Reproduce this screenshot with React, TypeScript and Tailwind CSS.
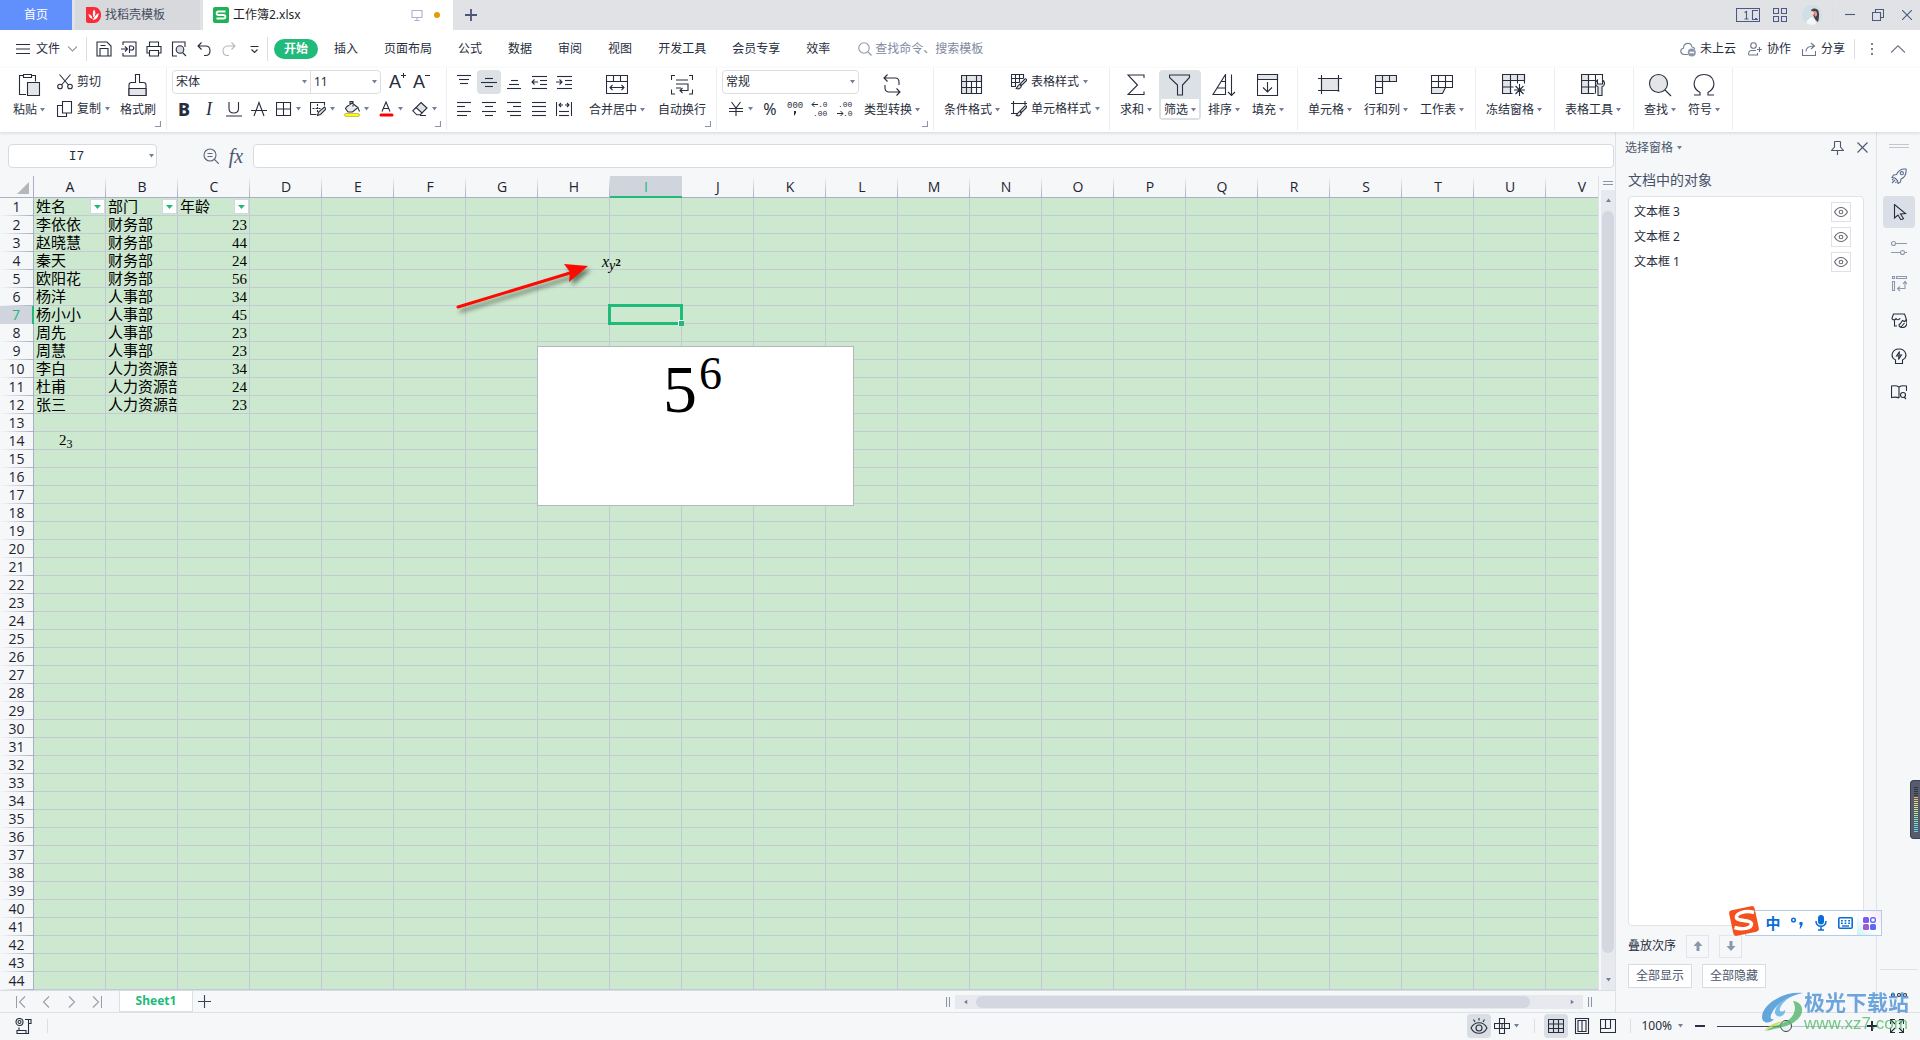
import type { ReactNode } from "react";
import clsx from "clsx";

const COLUMNS = "ABCDEFGHIJKLMNOPQRSTUV".split("");
const ROW_COUNT = 44;
const ACTIVE = { column: "I", row: 7 };

const SHEET: string[][] = [
  ["姓名", "部门", "年龄"],
  ["李依依", "财务部", "23"],
  ["赵晓慧", "财务部", "44"],
  ["秦天", "财务部", "24"],
  ["欧阳花", "财务部", "56"],
  ["杨洋", "人事部", "34"],
  ["杨小小", "人事部", "45"],
  ["周先", "人事部", "23"],
  ["周慧", "人事部", "23"],
  ["李白", "人力资源部", "34"],
  ["杜甫", "人力资源部", "24"],
  ["张三", "人力资源部", "23"],
];

const MENUS = ["插入", "页面布局", "公式", "数据", "审阅", "视图", "开发工具", "会员专享", "效率"];
const OBJECTS = ["文本框 3", "文本框 2", "文本框 1"];

interface IconProps {
  w?: number;
  h?: number;
  className?: string;
  children: ReactNode;
}

function Icon({ w = 16, h = 16, className, children }: IconProps) {
  return (
    <svg
      width={w}
      height={h}
      viewBox={`0 0 ${w} ${h}`}
      fill="none"
      stroke="currentColor"
      strokeWidth="1.1"
      className={clsx("shrink-0", className)}
      aria-hidden="true"
    >
      {children}
    </svg>
  );
}

function Caret({ className }: { className?: string }) {
  return (
    <svg width="5" height="4" viewBox="0 0 5 4" className={clsx("shrink-0 fill-[#73809b]", className)} aria-hidden="true">
      <path d="M0 0h5L2.5 3.5z" />
    </svg>
  );
}

function Divider({ className }: { className?: string }) {
  return <span className={clsx("w-px shrink-0 bg-[#dcdee3]", className)} />;
}

/* ---------- ribbon building blocks ---------- */

function Group({ className, corner, children }: { className: string; corner?: boolean; children: ReactNode }) {
  return (
    <div className={clsx("flex h-[62px] shrink-0 flex-col border-r border-[#eceef0]", className)}>
      <div className="flex h-[53px] pt-[2px] pl-[5px]">{children}</div>
      {corner && (
        <div className="flex justify-end pr-[5px]">
          <Icon w={6} h={6} className="text-[#8a93a8]">
            <path d="M5.5 0v5.5H0" />
          </Icon>
        </div>
      )}
    </div>
  );
}

interface BigButtonProps {
  label: string;
  icon: ReactNode;
  caret?: boolean;
  active?: boolean;
  className?: string;
}

function BigButton({ label, icon, caret = true, active, className }: BigButtonProps) {
  return (
    <button
      type="button"
      className={clsx("flex h-[50px] shrink-0 flex-col rounded-sm px-[2px]", active && "bg-[#dce1e6]", className)}
    >
      <span className="flex h-[29px] w-full items-center justify-center">{icon}</span>
      <span className={clsx("flex h-[19px] w-full items-center gap-[3px] px-[3px] pt-[2px]", active && "bg-white")}>
        {label}
        {caret && <Caret />}
      </span>
    </button>
  );
}

function SmallButton({ label, icon, caret }: { label: string; icon: ReactNode; caret?: boolean }) {
  return (
    <button type="button" className="flex h-6 items-center gap-1">
      {icon}
      {label}
      {caret && <Caret />}
    </button>
  );
}

function Tool({ name, active, children }: { name: string; active?: boolean; children: ReactNode }) {
  return (
    <button type="button" aria-label={name} className="flex h-6 w-[25px] items-center">
      <span className={clsx("flex h-6 w-6 items-center justify-center rounded-sm", active && "bg-[#dce1e6]")}>
        {children}
      </span>
    </button>
  );
}

function CaretTool({ name, children }: { name: string; children: ReactNode }) {
  return (
    <button type="button" aria-label={name} className="flex h-6 w-[34px] items-center gap-1 pl-1">
      {children}
      <Caret />
    </button>
  );
}

function Dropdown({ name, value, className }: { name: string; value: string; className: string }) {
  return (
    <span className={clsx("relative flex h-6 items-center", className)}>
      <select aria-label={name} className="h-full w-full appearance-none bg-transparent pl-[3px] text-xs outline-none">
        <option>{value}</option>
      </select>
      <Caret className="pointer-events-none absolute right-[3px]" />
    </span>
  );
}

/* Horizontal strokes of the alignment icons: [x, y, width] */
function Lines({ rows, children }: { rows: number[][]; children?: ReactNode }) {
  return (
    <Icon>
      {rows.map(([x, y, w]) => (
        <path key={`${x}-${y}`} d={`M${x} ${y}.5h${w}`} />
      ))}
      {children}
    </Icon>
  );
}

const Brush = () => (
  <>
    <path fill="#fff" d="M15.5 6.5l-5 5-1.5-1.5 5-5c1-.7 2 .5 1.5 1.5z" />
    <path fill="#dfe1e4" d="M8.800 10.500c-2 .3-2 2.500-3.500 4 2.200.8 4.700.2 5-2.500z" />
  </>
);

/* ---------- top bars ---------- */

function TitleBar() {
  return (
    <header className="flex h-[30px] shrink-0 items-stretch bg-[#e1e2e6]">
      <button type="button" className="w-[72px] bg-[#618ffc] text-white">
        首页
      </button>
      <button type="button" className="ml-[3px] flex w-[125px] items-center gap-1 bg-[#d8d9dc] pl-[11px] text-[#454c5f]">
        <svg width="15" height="16" viewBox="0 0 15 16" aria-hidden="true">
          <path fill="#fa2c37" d="M0 0h8c4 0 7 3.500 7 8s-3 8-7 8H2c-1 0-2-1-2-2z" />
          <path fill="#fff" d="M8 2.500c2.200 2.500 1.500 6-.5 8-1-3-1-5.500.5-8zM2.500 7c2.500.5 4 2.500 4 4.800C4 11.500 2.700 9.500 2.500 7zM12.500 6c.5 3-1.500 6.500-5.800 7.200C8 10.200 9.500 8 12.500 6z" />
        </svg>
        找稻壳模板
      </button>
      <div className="ml-[3px] flex w-[250px] items-center bg-white pl-[10px] text-[#1c1f2a]">
        <svg width="16" height="16" viewBox="0 0 16 16" className="mr-1" aria-hidden="true">
          <rect width="16" height="16" rx="2" fill="#1eb257" />
          <path d="M12.500 4.500h-7c-2.500 0-2.500 3.500 0 3.500h5c2.500 0 2.500 3.500 0 3.500h-7" fill="none" stroke="#fff" strokeWidth="1.800" />
        </svg>
        工作簿2.xlsx
        <Icon w={12} h={12} className="ml-auto text-[#a9b4cc]">
          <path d="M1 1.500h10v7H1zM6 8.500v2.500M3.500 11.500h5" />
        </Icon>
        <span className="mr-[13px] ml-[11px] size-[6px] rounded-full bg-[#e59a0a]" />
      </div>
      <button type="button" aria-label="新建" className="ml-3 text-[#4b5676]">
        <Icon w={12} h={12}>
          <path d="M6 0v12M0 6h12" strokeWidth="1.800" />
        </Icon>
      </button>
      <div className="ml-auto flex items-center pr-2 text-[#4a5a80]">
        <Icon w={24} h={14}>
          <path d="M.5.5h23v13H.5zM22 2.500h-5.500v9H22M19 10.500h2" />
          <path d="M8.500 4.500l2-1v7.500M8.500 11h4" />
        </Icon>
        <Icon w={14} h={14} className="ml-[13px]">
          <path d="M.5.5h5v5h-5zM8.500.5h5v5h-5zM.5 8.500h5v5h-5zM8.500 8.500h5v5h-5z" />
        </Icon>
        <svg width="20" height="20" viewBox="0 0 20 20" className="ml-[15px] rounded-full" aria-hidden="true">
          <rect width="20" height="20" fill="#cfdfe6" />
          <path fill="#4a3c42" d="M9 5c2-2.500 6.500-2 7.500 1 1 3.500.5 8-.5 11-2-1-3-3-4-5z" />
          <path fill="#d99a92" d="M12 6c2-.5 3.500 1 3 4-.5 1.500-1.500 2-2.500 1z" />
          <path fill="#f3d5cb" d="M8 7c1-1.500 3-1.500 4 0 .5 2-.5 3.500-2 4C8.500 10.500 7.500 9 8 7z" />
          <path fill="#f4f7f8" d="M4 20c0-4 2.500-6.500 6-8 2 2 4 4 4.500 8z" />
        </svg>
        <Divider className="ml-[10px] h-5 bg-[#c5c8cf]" />
        <button type="button" aria-label="最小化" className="ml-3">
          <Icon w={10} h={12}>
            <path d="M0 5.500h10" />
          </Icon>
        </button>
        <button type="button" aria-label="还原" className="ml-[17px]">
          <Icon w={12} h={12}>
            <path d="M.5 3.500h8v8h-8zM3.500 3.500v-3h8v8h-3" />
          </Icon>
        </button>
        <button type="button" aria-label="关闭" className="ml-[18px]">
          <Icon w={10} h={10}>
            <path d="M0 0l10 10M10 0L0 10" />
          </Icon>
        </button>
      </div>
    </header>
  );
}

function QuickButton({ name, faded, children }: { name: string; faded?: boolean; children: ReactNode }) {
  return (
    <button type="button" aria-label={name} className={clsx("flex w-[25px] justify-center", faded && "text-[#b3b6be]")}>
      <Icon>{children}</Icon>
    </button>
  );
}

function MenuBar() {
  return (
    <nav className="flex h-[38px] shrink-0 items-center bg-white pr-[15px] pl-4">
      <button type="button" className="flex items-center">
        <Icon w={14} h={10} className="mr-[6px]">
          <path d="M0 .5h14M0 5h14M0 9.500h14" />
        </Icon>
        文件
        <Icon w={9} h={6} className="ml-2 text-[#9297a5]">
          <path d="M0 .5l4.500 4.500L9 .5" />
        </Icon>
      </button>
      <Divider className="mr-1 ml-[9px] h-6" />
      <QuickButton name="保存">
        <path d="M1 1h10l4 4v10H1zM4 15V7.500h8V15M4.500 4.500h5" />
      </QuickButton>
      <QuickButton name="输出为PDF">
        <path d="M2 4V1h13v14H2v-3M0 8h6M4 5.500L6.500 8 4 10.500M8.500 12V5h2c3 0 3 4 0 4h-2" />
      </QuickButton>
      <QuickButton name="打印">
        <path d="M3.500 5V1h9v4M3.500 12H1V5.500h14V12h-2.500M3.500 9.500h9V15h-9z" />
      </QuickButton>
      <QuickButton name="打印预览">
        <path d="M6 15H1.500V1h12.500v5M11.500 11.500L15 15" />
        <circle cx="9" cy="8.500" r="3.800" fill="#d9dce1" />
      </QuickButton>
      <QuickButton name="撤销">
        <path d="M5.500 1.500L2 5l3.500 3.500M2 5h7.500c6 0 6 9.500 0 9.500H8" />
      </QuickButton>
      <QuickButton name="恢复" faded>
        <path d="M10.500 1.500L14 5l-3.500 3.500M14 5H6.500c-6 0-6 9.500 0 9.500H8" />
      </QuickButton>
      <QuickButton name="自定义快速访问工具栏">
        <path d="M4.500 5.500h8M5.500 8.500l3 3 3-3" />
      </QuickButton>
      <Divider className="mr-[6px] ml-px h-6" />
      <button type="button" className="mr-4 h-5 rounded-full bg-[#20ba7b] px-[10px] font-bold text-white">
        开始
      </button>
      <div className="flex gap-[26px]">
        {MENUS.map((menu) => (
          <button type="button" key={menu}>
            {menu}
          </button>
        ))}
      </div>
      <label className="ml-7 flex items-center gap-[3px] text-[#8d99b0]">
        <Icon w={14} h={14}>
          <circle cx="6" cy="6" r="5.200" />
          <path d="M10 10l3.500 3.500" />
        </Icon>
        <input
          aria-label="查找命令"
          placeholder="查找命令、搜索模板"
          className="w-32 outline-none placeholder:text-[#8089a0]"
        />
      </label>
      <div className="ml-auto flex items-center">
        <button type="button" className="flex items-center gap-1">
          <Icon className="text-[#77819a]">
            <path d="M8 13.500H4.500c-4.500 0-5-5.500-1-6.200C3.500 1.500 11 .5 12 6c1.500.2 2.500 1 2.800 2" />
            <circle cx="11.800" cy="11.500" r="4" fill="#8d97ab" stroke="none" />
            <path d="M9.500 11.500h4.600" stroke="#fff" strokeWidth="1.500" />
          </Icon>
          未上云
        </button>
        <button type="button" className="ml-3 flex items-center gap-[5px]">
          <Icon w={14} h={14} className="text-[#6b7489]">
            <circle cx="5.500" cy="3.500" r="2.800" />
            <path d="M8 8.500H3c-3 0-2.500 4.500-2 4.500h8.500V11M9 7.500h5M11.500 5v5" />
          </Icon>
          协作
        </button>
        <button type="button" className="ml-[11px] flex items-center gap-[5px]">
          <Icon w={14} h={14} className="text-[#6b7489]">
            <path d="M.5 7v6.500h13V9M4 9.500C4 6 6.500 4 12 4M9 1l3.500 3L9 7" />
          </Icon>
          分享
        </button>
        <Divider className="ml-[9px] h-5" />
        <button type="button" aria-label="更多" className="ml-[15px] text-[#7c8190]">
          <svg width="4" height="14" viewBox="0 0 4 14" fill="currentColor" aria-hidden="true">
            <path d="M1 1h2v2H1zM1 6h2v2H1zM1 11h2v2H1z" />
          </svg>
        </button>
        <button type="button" aria-label="收起功能区" className="ml-[17px] text-[#6b7080]">
          <Icon w={14} h={8}>
            <path d="M0 7.500L7 .8l7 6.700" />
          </Icon>
        </button>
      </div>
    </nav>
  );
}

function Ribbon() {
  return (
    <div className="relative z-10 flex h-16 shrink-0 bg-white shadow-[0_1px_3px_rgba(60,70,90,0.18)]">
      <Group className="w-[167px]" corner>
        <BigButton
          className="ml-[3px]"
          label="粘贴"
          icon={
            <Icon w={24} h={24}>
              <path d="M9 21.500H2.500v-19H6M15 2.500h3.500v6M6.500 1.500h8v3h-8z" />
              <path d="M10.500 9.500h12v13h-12z" fill="#e3e5e9" />
            </Icon>
          }
        />
        <div className="ml-[7px] flex w-[58px] flex-col gap-[3px]">
          <SmallButton
            label="剪切"
            icon={
              <Icon>
                <path d="M2.500.5L11.500 11M13.500.5L4.500 11" />
                <circle cx="3" cy="12.500" r="2.300" />
                <circle cx="13" cy="12.500" r="2.300" />
              </Icon>
            }
          />
          <SmallButton
            label="复制"
            caret
            icon={
              <Icon>
                <path d="M5 4.500H.5v11h9V12M5.500.5h9V12h-9z" />
              </Icon>
            }
          />
        </div>
        <BigButton
          label="格式刷"
          caret={false}
          icon={
            <Icon w={20} h={24}>
              <path d="M7.500 9.500v-8h4v8h4c1.500 0 2.500 1 2.500 2.500v10.500H1V12c0-1.500 1-2.500 2.500-2.500z" />
              <path d="M1 15.500h17v7H1z" fill="#e3e5e9" />
            </Icon>
          }
        />
      </Group>

      <Group className="w-[280px]" corner>
        <div className="flex flex-col gap-[3px]">
          <div className="flex">
            <div className="flex h-6 rounded-sm border border-[#dcdee2]">
              <Dropdown name="字体" value="宋体" className="-my-px w-[138px] border-r border-[#dcdee2]" />
              <Dropdown name="字号" value="11" className="-my-px w-[69px]" />
            </div>
            <button type="button" aria-label="增大字号" className="ml-1 flex h-6 w-6 items-center justify-center">
              <svg width="18" height="22" fill="currentColor" aria-hidden="true">
                <text x="1" y="17" fontSize="18" className="font-['Liberation_Sans',sans-serif]">A</text>
                <path d="M13 4.500h5M15.500 2v5" stroke="currentColor" />
              </svg>
            </button>
            <button type="button" aria-label="减小字号" className="flex h-6 w-6 items-center justify-center">
              <svg width="18" height="22" fill="currentColor" aria-hidden="true">
                <text x="1" y="17" fontSize="18" className="font-['Liberation_Sans',sans-serif]">A</text>
                <path d="M13 4.500h5" stroke="currentColor" />
              </svg>
            </button>
          </div>
          <div className="flex">
            <Tool name="加粗">
              <span className="text-lg leading-5 font-extrabold">B</span>
            </Tool>
            <Tool name="倾斜">
              <span className="font-['Liberation_Serif',serif] text-lg leading-5 italic">I</span>
            </Tool>
            <Tool name="下划线">
              <Icon>
                <path d="M3 1v6.500c0 6 9.500 6 9.500 0V1M0 15h16" />
              </Icon>
            </Tool>
            <Tool name="删除线">
              <Icon>
                <path d="M3 15L8 1.500 13 15M0 9.500h16" />
              </Icon>
            </Tool>
            <CaretTool name="边框">
              <Icon>
                <path d="M.5 1.500h14v13H.5zM7.500 1.500v13M.5 8h14" />
              </Icon>
            </CaretTool>
            <CaretTool name="绘图边框">
              <Icon>
                <path d="M.5 13.500V1.500h14v3M.5 13.500h6" />
                <path d="M7.500 3v8M2.500 7.500h9" strokeDasharray="2 1" />
                <path d="M7.500 14.500l1-3.500 6-5 1.500 2-5.500 5.500z" fill="#dfe1e4" />
              </Icon>
            </CaretTool>
            <CaretTool name="填充颜色">
              <Icon>
                <path d="M3 5.500L8 2l6 4.500L8.500 11H4L1.500 7.500zM6 4V.5h3v5" fill="#e9eaee" />
                <path d="M14 7l1.500 3.500" />
                <rect x=".5" y="12.500" width="15" height="3" rx="1.500" fill="#ffff00" stroke="#9a9a4a" strokeWidth=".6" />
              </Icon>
            </CaretTool>
            <CaretTool name="字体颜色">
              <Icon>
                <path d="M4 10.500L8 1l4 9.500M5.500 7.500h5" />
                <rect x="1.500" y="12.500" width="14" height="3" rx="1.500" fill="#ff0000" stroke="none" />
              </Icon>
            </CaretTool>
            <CaretTool name="清除">
              <Icon>
                <path d="M9 1.500l6 5.500-5 5-6-5.500z" fill="#dfe1e4" />
                <path d="M4 6.500L.8 9.800l4 4h3.400L10 12M8 14.500h6" />
              </Icon>
            </CaretTool>
          </div>
        </div>
      </Group>

      <Group className="w-[270px]" corner>
        <div className="flex w-[125px] shrink-0 flex-col gap-[3px]">
          <div className="flex">
            <Tool name="顶端对齐">
              <Lines rows={[[1, 1, 14], [3, 5, 10], [4, 9, 8]]} />
            </Tool>
            <Tool name="垂直居中" active>
              <Lines rows={[[4, 4, 8], [0, 8, 16], [4, 12, 8]]} />
            </Tool>
            <Tool name="底端对齐">
              <Lines rows={[[5, 6, 7], [3, 10, 10], [1, 14, 14]]} />
            </Tool>
            <Tool name="减少缩进">
              <Lines rows={[[1, 2, 15], [9, 6, 7], [9, 10, 7], [1, 14, 15]]}>
                <path d="M7 8H1M3.500 5.500L1 8l2.500 2.500" />
              </Lines>
            </Tool>
            <Tool name="增加缩进">
              <Lines rows={[[1, 2, 15], [9, 6, 7], [9, 10, 7], [1, 14, 15]]}>
                <path d="M0 8h6M3.500 5.500L6 8l-2.500 2.500" />
              </Lines>
            </Tool>
          </div>
          <div className="flex">
            <Tool name="左对齐">
              <Lines rows={[[1, 1, 14], [1, 5, 8], [1, 10, 14], [1, 14, 10]]} />
            </Tool>
            <Tool name="水平居中">
              <Lines rows={[[1, 1, 14], [4, 5, 8], [1, 10, 14], [4, 14, 8]]} />
            </Tool>
            <Tool name="右对齐">
              <Lines rows={[[1, 1, 14], [7, 5, 8], [1, 10, 14], [4, 14, 11]]} />
            </Tool>
            <Tool name="两端对齐">
              <Lines rows={[[1, 1, 14], [1, 5, 14], [1, 10, 14], [1, 14, 14]]} />
            </Tool>
            <Tool name="分散对齐">
              <Lines rows={[[3, 10, 10], [3, 14, 10]]}>
                <path d="M.5 1v14M15.500 1v14M3 4h4M9 4h4M5 2L3 4l2 2M11 2l2 2-2 2" />
              </Lines>
            </Tool>
          </div>
        </div>
        <BigButton
          className="ml-[7px]"
          label="合并居中"
          icon={
            <Icon w={22} h={20}>
              <path d="M.5.5h21v18H.5zM.5 6.500h21M7.500.5v6M14.500.5v6M4 12.500h14M6.500 10L4 12.500 6.500 15M15.500 10l2.500 2.500-2.500 2.500" />
            </Icon>
          }
        />
        <BigButton
          className="ml-[3px]"
          label="自动换行"
          caret={false}
          icon={
            <Icon w={22} h={20}>
              <path d="M4 .5H.5V5M18 .5h3.500V5M4 19H.5v-4.500M18 19h3.500v-4.500M5 5h12M5 9h12v6.500H9M5 13h5M11.500 13L9 15.500l2.500 2.500" />
            </Icon>
          }
        />
      </Group>

      <Group className="w-[217px]" corner>
        <div className="flex w-[137px] shrink-0 flex-col gap-[3px]">
          <Dropdown name="数字格式" value="常规" className="rounded-sm border border-[#dcdee2]" />
          <div className="flex pl-[2px] font-['Liberation_Mono',monospace]">
            <CaretTool name="货币">
              <Icon>
                <path d="M3.500 1L8 7l4.500-6M1 7.500h14M1 10.500h14M8 7v8" />
              </Icon>
            </CaretTool>
            <Tool name="百分比">
              <span className="font-['Noto_Sans',sans-serif] text-base leading-5">%</span>
            </Tool>
            <Tool name="千位分隔">
              <svg width="18" height="20" fill="currentColor" aria-hidden="true">
                <text x="1" y="9" fontSize="9">000</text>
                <path d="M8 12h2v2l-1.500 2.500H8z" />
              </svg>
            </Tool>
            <Tool name="增加小数位">
              <svg width="18" height="20" fill="currentColor" aria-hidden="true">
                <text x="7" y="8" fontSize="8">.0</text>
                <text x="2" y="17" fontSize="8">.00</text>
                <path d="M7 5.500H1M3.500 3L1 5.500 3.500 8" stroke="currentColor" fill="none" />
              </svg>
            </Tool>
            <Tool name="减少小数位">
              <svg width="18" height="20" fill="currentColor" aria-hidden="true">
                <text x="2" y="8" fontSize="8">.00</text>
                <text x="7" y="17" fontSize="8">.0</text>
                <path d="M1 14.500h6M4.500 12L7 14.500 4.500 17" stroke="currentColor" fill="none" />
              </svg>
            </Tool>
          </div>
        </div>
        <BigButton
          label="类型转换"
          icon={
            <Icon w={20} h={22}>
              <path d="M5.500.5L2 4l3.500 3.500M2 4h11c2.500 0 4 1.500 4 4v3M14.500 21.500L18 18l-3.500-3.500M18 18H7c-2.500 0-4-1.500-4-4v-3" />
            </Icon>
          }
        />
      </Group>

      <Group className="w-[176px]">
        <BigButton
          label="条件格式"
          icon={
            <Icon w={22} h={20}>
              <path d="M.5.500h20v6H5.500v6h5v6H.5z" fill="#e3e5e9" />
              <path d="M.5.500h20v18H.5zM.5 6.500h20M.5 12.500h20M5.500.5v18M15.500.5v18M10.500 6.500v12" />
            </Icon>
          }
        />
        <div className="ml-[6px] flex flex-col gap-[3px]">
          <SmallButton
            label="表格样式"
            caret
            icon={
              <Icon>
                <path d="M5 12.500H.5V.5h12v4M.5 4.500h12M.5 8.500h8M4.500.5v12M8.500.5v8" />
                <Brush />
              </Icon>
            }
          />
          <SmallButton
            label="单元格样式"
            caret
            icon={
              <Icon>
                <path d="M0 2.500h16M2.500 0v13M14 0v4M0 12.500h6" />
                <Brush />
              </Icon>
            }
          />
        </div>
      </Group>

      <Group className="w-[188px]">
        <div className="flex gap-[2px]">
          <BigButton
            label="求和"
            icon={
              <Icon w={18} h={22}>
                <path d="M17 4V1H1l9.500 10L1 20.500h16v-3" />
              </Icon>
            }
          />
          <BigButton
            label="筛选"
            active
            icon={
              <Icon w={22} h={22}>
                <path d="M.5 1h20v2.500l-7 7.500v10h-5V11l-8-7.500z" />
              </Icon>
            }
          />
          <BigButton
            label="排序"
            icon={
              <Icon w={24} h={22}>
                <path d="M13.500.5v20H1zM9.500 7.500h4M5.500 14h8M19.500.5v21M16 18l3.500 3.500L23 18" />
              </Icon>
            }
          />
          <BigButton
            label="填充"
            icon={
              <Icon w={22} h={22}>
                <path d="M.5.500h20v5H.5z" fill="#e3e5e9" />
                <path d="M.5.500h20v21H.5zM10.500 8v10M6 13.500l4.500 4.500 4.500-4.500" />
              </Icon>
            }
          />
        </div>
      </Group>

      <Group className="w-[178px]">
        <div className="flex gap-[2px]">
          <BigButton
            label="单元格"
            icon={
              <Icon w={24} h={20}>
                <path d="M3.500 3.500h17v12h-17z" fill="#e3e5e9" />
                <path d="M0 3.500h24M0 15.500h17M3.500 0v19M20.500 0v12M19.500 16h2" />
              </Icon>
            }
          />
          <BigButton
            label="行和列"
            icon={
              <Icon w={22} h={20}>
                <path d="M.5.500h21v6h-14v12h-7z" fill="#e3e5e9" />
                <path d="M.5 6.500h7M7.500.5v6M14.500.5v6" />
                <path d="M.5 6.500h7v12h-7zM.5 12.500h7" fill="#fff" />
              </Icon>
            }
          />
          <BigButton
            label="工作表"
            icon={
              <Icon w={22} h={20}>
                <path d="M.5 12.500h14l-3 6H.5z" fill="#e3e5e9" />
                <path d="M.5.500h21v12H.5zM.5 6.500h21M7.500.5v12M14.500.5v12" />
              </Icon>
            }
          />
        </div>
      </Group>

      <Group className="w-[79px]">
        <BigButton
          label="冻结窗格"
          icon={
            <Icon w={24} h={22}>
              <path d="M.5.500h22v6h-14v13h-8z" fill="#e3e5e9" />
              <path d="M.5 19.500V.5h22v9M.5 19.500h10M.5 6.500h22M.5 13h11M8.500.5v19M15.500.5v9M17.500 10v12M12 16h11M13.500 12l8 8M21.500 12l-8 8" />
            </Icon>
          }
        />
      </Group>

      <Group className="w-[79px]">
        <BigButton
          label="表格工具"
          icon={
            <Icon w={24} h={22}>
              <path d="M.5.500h7v19h-7z" fill="#e3e5e9" />
              <path d="M.5 19.500V.5h21v5M.5 19.500h13M.5 6.500h14M.5 13h14M7.500.5v19M14.500.5v19" />
              <path d="M16.500 6c-3 2-2.500 5.500.5 7v8.500h4V13c3-1.500 3.500-5 .5-7v4h-5z" fill="#e3e5e9" />
            </Icon>
          }
        />
      </Group>

      <Group className="w-[99px]">
        <div className="flex gap-[2px]">
          <BigButton
            label="查找"
            icon={
              <Icon w={24} h={24}>
                <circle cx="10.500" cy="10.500" r="9" fill="#e3e5e9" />
                <path d="M17 17l6 6" />
              </Icon>
            }
          />
          <BigButton
            label="符号"
            icon={
              <Icon w={22} h={24}>
                <path d="M1 22h6v-2.500C-3 14 1 1.500 11 1.500S25 14 15 19.500V22h6" />
              </Icon>
            }
          />
        </div>
      </Group>
    </div>
  );
}

/* ---------- worksheet ---------- */

function FormulaBar() {
  return (
    <div className="flex h-11 shrink-0 items-start pt-3 pr-px pl-2">
      <div className="relative flex h-6 w-[149px] items-center">
        <input
          aria-label="名称框"
          defaultValue="I7"
          className="h-full w-full rounded-sm border border-[#d7dadf] bg-white pr-3 text-center font-['Liberation_Mono',monospace] text-[13px] outline-none"
        />
        <Caret className="absolute right-[3px]" />
      </div>
      <button type="button" aria-label="查找公式" className="mt-1 ml-[46px] text-[#5d667c]">
        <Icon w={16} h={16}>
          <circle cx="7" cy="7" r="6" />
          <path d="M11.500 11.500L16 16M4.500 5.500h5M4.500 8.500h5" />
        </Icon>
      </button>
      <button
        type="button"
        aria-label="插入函数"
        className="ml-[9px] w-4 font-['Liberation_Serif',serif] text-xl leading-6 text-[#4d566c] italic"
      >
        fx
      </button>
      <input
        aria-label="编辑栏"
        className="ml-[9px] h-6 min-w-0 flex-1 rounded-sm border border-[#d7dadf] bg-white px-2 outline-none"
      />
    </div>
  );
}

function FilterButton({ column }: { column: string }) {
  return (
    <button
      type="button"
      aria-label={`筛选${column}`}
      className="flex h-[15px] w-[15px] items-center justify-center border border-[#d3d7df] bg-white"
    >
      <svg width="7" height="4" viewBox="0 0 7 4" className="fill-[#20ba7b]" aria-hidden="true">
        <path d="M0 0h7L3.500 4z" />
      </svg>
    </button>
  );
}

function Grid() {
  return (
    <table className="w-[1618px] table-fixed border-separate border-spacing-0 font-['Open_Sans',sans-serif] text-sm leading-[14px]">
      <thead>
        <tr className="h-[22px]">
          <th className="w-[34px] border-r border-b border-[#a9afc5] p-0">
            <svg width="12" height="12" className="mt-[3px] mr-1 ml-auto block fill-[#b7b7b7]" aria-hidden="true">
              <path d="M12 0v12H0z" />
            </svg>
          </th>
          {COLUMNS.map((column) => (
            <th
              key={column}
              scope="col"
              className={clsx(
                "w-[72px] border-b p-0 font-normal",
                column === ACTIVE.column
                  ? "border-[#20ba7b] bg-[#d0d4dd] text-[#20ba7b] shadow-[inset_0_-1px_0_#20ba7b]"
                  : "border-[#a9afc5] bg-[linear-gradient(to_bottom,transparent,#a9afc5)] bg-[length:1px_100%] bg-right bg-no-repeat text-[#1f2430]",
              )}
            >
              {column}
            </th>
          ))}
        </tr>
      </thead>
      <tbody>
        {Array.from({ length: ROW_COUNT }, (_, i) => i + 1).map((row) => (
          <tr key={row} className="h-[18px]">
            <th
              scope="row"
              className={clsx(
                "p-0 font-normal",
                row === ACTIVE.row
                  ? "border-r-2 border-[#20ba7b] bg-[#d0d4dd] text-[#20ba7b]"
                  : "border-r border-[#a9afc5] bg-[#f5f7f9] bg-[linear-gradient(to_right,transparent,#a9afc5)] bg-[length:100%_1px] bg-bottom bg-no-repeat text-[#1f2430]",
              )}
            >
              {row}
            </th>
            {COLUMNS.map((column, c) => {
              const value = SHEET[row - 1]?.[c];
              return (
                <td
                  key={column}
                  className={clsx(
                    "overflow-hidden border-r border-b border-[#c3cad6] p-0 font-['Liberation_Serif','Noto_Sans_CJK_SC',serif] text-[15px] whitespace-nowrap text-black",
                    c === 2 && row > 1 ? "pr-[2px] text-right" : "pl-[2px]",
                  )}
                >
                  {row === 1 && value ? (
                    <div className="flex h-4 items-center justify-between">
                      {value}
                      <FilterButton column={value} />
                    </div>
                  ) : (
                    value
                  )}
                </td>
              );
            })}
          </tr>
        ))}
      </tbody>
    </table>
  );
}

/* Objects floating over the cells, placed from the top-left corner of the sheet */
function SheetObjects() {
  return (
    <div className="absolute top-0 left-0 font-['Liberation_Serif',serif] text-black">
      <p className="absolute top-[252px] left-[59px] text-[15px] leading-6">
        2<sub className="text-xs">3</sub>
      </p>
      <p className="absolute top-[74px] left-[602px] flex text-base leading-6 italic">
        x<span className="pt-1 text-sm leading-6">y</span>
        <span className="text-[11px] leading-6 font-bold not-italic">2</span>
      </p>
      <div className="absolute top-[128px] left-[608px] h-[21px] w-[75px] border-3 border-[#20ba7b]" />
      <div className="absolute top-[144px] left-[678px] size-[6px] border-t border-l border-white bg-[#20ba7b]" />
      <div className="absolute top-[170px] left-[537px] h-[160px] w-[317px] border border-[#b4b7bb] bg-white pt-[2px] pl-[125px] leading-[80px]">
        <span className="text-[68px]">5</span>
        <sup className="-top-[23px] ml-[2px] text-[46px]">6</sup>
      </div>
      <svg width="150" height="70" className="absolute top-[79px] left-[450px] drop-shadow-[3px_4px_2px_rgba(40,60,40,0.6)]" aria-hidden="true">
        <path d="M8 52L120 18" stroke="#ff0a00" strokeWidth="3" strokeLinecap="round" />
        <path d="M138 11l-24-2 6 8-1 10z" fill="#ff0a00" />
      </svg>
    </div>
  );
}

function VerticalScroll() {
  return (
    <div className="flex w-[17px] shrink-0 flex-col border-l border-[#dfe1e6] pl-[2px]">
      <div className="flex h-[14px] flex-col items-center gap-[2px] pt-[5px]">
        <span className="h-px w-[10px] bg-[#8d96ab]" />
        <span className="h-px w-[10px] bg-[#8d96ab]" />
      </div>
      <div className="flex flex-1 flex-col items-center bg-[#e7e9ee] py-2">
        <Caret className="rotate-180" />
        <div className="mt-[9px] mb-[25px] w-3 flex-1 rounded-full bg-[#d4d7df]" />
        <Caret />
      </div>
    </div>
  );
}

function SheetTabs() {
  return (
    <div className="flex h-[22px] shrink-0 items-center border-t border-[#d9dce2] pl-4">
      <div className="flex w-[103px] items-center text-[#9c9fa8]">
        <button type="button" aria-label="第一张工作表">
          <Icon w={10} h={12}>
            <path d="M.5 0v12M9 .5L3.500 6 9 11.500" />
          </Icon>
        </button>
        <button type="button" aria-label="上一张工作表" className="ml-4">
          <Icon w={8} h={12}>
            <path d="M7 .5L1.500 6 7 11.500" />
          </Icon>
        </button>
        <button type="button" aria-label="下一张工作表" className="ml-[18px]">
          <Icon w={8} h={12}>
            <path d="M1 .5L6.500 6 1 11.500" />
          </Icon>
        </button>
        <button type="button" aria-label="最后一张工作表" className="ml-4">
          <Icon w={10} h={12}>
            <path d="M9.500 0v12M1 .5L6.500 6 1 11.500" />
          </Icon>
        </button>
      </div>
      <button type="button" className="h-full w-[74px] border-x border-b border-[#dcdfe6] bg-white font-bold text-[#20ba7b]">
        Sheet1
      </button>
      <button type="button" aria-label="新建工作表" className="ml-[5px] text-[#3a4258]">
        <Icon w={13} h={13}>
          <path d="M6.500 0v13M0 6.500h13" />
        </Icon>
      </button>
      <div className="ml-auto flex w-[669px] items-center text-[#8d96ab]">
        <Icon w={4} h={12}>
          <path d="M.5 1v10M3.500 1v10" />
        </Icon>
        <div className="mx-[5px] flex h-[14px] flex-1 items-center bg-[#e7e9ee] px-2">
          <Caret className="rotate-90" />
          <div className="mr-10 ml-2 h-3 flex-1 rounded-full bg-[#d4d7df]" />
          <Caret className="-rotate-90" />
        </div>
        <Icon w={4} h={12}>
          <path d="M.5 1v10M3.500 1v10" />
        </Icon>
        <span className="w-[23px]" />
      </div>
    </div>
  );
}

/* ---------- right side ---------- */

function SelectionPane() {
  return (
    <aside className="flex w-[261px] shrink-0 flex-col border-l border-[#dde1e8] px-3 pb-6">
      <div className="-ml-[3px] flex h-[31px] shrink-0 items-center text-[#4c566d]">
        选择窗格
        <Caret className="ml-1" />
        <button type="button" aria-label="固定" className="ml-auto">
          <Icon w={13} h={14}>
            <path d="M3.500.5h6M3.500.5v5.500l-3 3.500h12l-3-3.500V.5M6.500 9.500V14" />
          </Icon>
        </button>
        <button type="button" aria-label="关闭窗格" className="-mr-1 ml-[13px]">
          <Icon w={11} h={11}>
            <path d="M.5.500l10 10M10.500.5l-10 10" />
          </Icon>
        </button>
      </div>
      <h2 className="flex h-[33px] shrink-0 items-center text-sm text-[#475067]">文档中的对象</h2>
      <ul className="flex-1 rounded-sm border border-[#e0e3e8] bg-white pt-[2px] pr-3 pl-[5px]">
        {OBJECTS.map((name) => (
          <li key={name} className="flex h-[25px] items-center justify-between">
            {name}
            <button
              type="button"
              aria-label={`显示${name}`}
              className="flex size-5 items-center justify-center border border-[#dfe1e4] text-[#6a6f78]"
            >
              <Icon w={14} h={10}>
                <path d="M.5 5C4-1 10-1 13.500 5 10 11 4 11 .5 5z" />
                <circle cx="7" cy="5" r="1.800" />
              </Icon>
            </button>
          </li>
        ))}
      </ul>
      <div className="mt-2 flex h-6 items-center gap-[10px]">
        叠放次序
        <button type="button" aria-label="上移一层" className="flex size-[23px] items-center justify-center border border-[#e3e5ea]">
          <svg width="10" height="10" className="fill-[#8d96ab]" aria-hidden="true">
            <path d="M5 0l4.500 5h-3v5h-3V5h-3z" />
          </svg>
        </button>
        <button type="button" aria-label="下移一层" className="flex size-[23px] items-center justify-center border border-[#e3e5ea]">
          <svg width="10" height="10" className="fill-[#8d96ab]" aria-hidden="true">
            <path d="M5 10L.5 5h3V0h3v5h3z" />
          </svg>
        </button>
      </div>
      <div className="mt-[6px] flex gap-[10px] text-[#4c566d]">
        <button type="button" className="h-6 w-16 border border-[#d8dbe1] bg-white">
          全部显示
        </button>
        <button type="button" className="h-6 w-16 border border-[#d8dbe1] bg-white">
          全部隐藏
        </button>
      </div>
    </aside>
  );
}

function RailButton({ name, className, children }: { name: string; className?: string; children: ReactNode }) {
  return (
    <button type="button" aria-label={name} className={clsx("flex size-8 items-center justify-center rounded-sm", className)}>
      <Icon>{children}</Icon>
    </button>
  );
}

function SideRail() {
  return (
    <div className="flex w-11 shrink-0 flex-col items-center border-l border-[#dde1e8] pt-3">
      <span className="h-[4px] w-5 border-y border-[#c3c6cc]" />
      <div className="mt-3 flex flex-col gap-1">
        <RailButton name="推荐" className="text-[#5b6b8c]">
          <path d="M15 1c-5-.5-8 2-9.500 5.500L2.500 7 1 9.500l3 .5 2.500 2.500.5 3 2.500-1.500.5-3C13.500 9.500 15.500 6 15 1zM1 15l3-3M1 12l1.500-1M4.500 15l1-1.500" />
          <circle cx="10.800" cy="5.200" r="1.600" />
        </RailButton>
        <RailButton name="选择" className="bg-[#d9dee7]">
          <path d="M3.500.5v13.500l3.500-3 3 5 2.500-1.500-3-4.500 5-.5z" />
        </RailButton>
        <RailButton name="属性" className="text-[#8f98ac]">
          <path d="M5 3.500h11M0 12.500h9M14 12.500h2" />
          <circle cx="2.500" cy="3.500" r="2" />
          <circle cx="11.500" cy="12.500" r="2" />
        </RailButton>
        <RailButton name="版式" className="text-[#8f98ac]">
          <path d="M1.500.5h2v2h-2zM5.500.5h10v2h-10zM1.500 5.500h2v9h-2zM14 6v6.500H7M12 8l2-2.500L16 8M9 10.500l-2.500 2L9 15" />
        </RailButton>
        <RailButton name="分析">
          <path d="M6 14H3.500V8M1 6l1.500-4h11l1.500 4v2M1 6c0 2.500 4 2.500 4 0 0 2.500 4 2 4 0M9.500 11.500l2-3 2 1 2-1.500c1.500 5-1 7.500-4 7.500-2 0-3.500-1-3.500-3z" />
          <path d="M10 15l3.500-4" />
        </RailButton>
        <RailButton name="智能助手">
          <path d="M4.500 14.500V12C-1.500 9 1 1 8 1s9.500 8 3.500 11v3.500h-7zM8.500 3.500L5.500 8H8l-.5 3.500 3-4.500H8z" />
        </RailButton>
        <RailButton name="帮助">
          <path d="M8 3v11M8 3C6 1.500 3 1.500.5 2v11.500c2.500-.5 5.500-.5 7.500.5M8 3c2-1.500 5-1.500 7.500-1v5M15 15l-2-2" />
          <circle cx="12" cy="11" r="2.500" />
        </RailButton>
      </div>
      <div className="mt-auto mb-[14px] flex w-[38px] flex-col items-center border-t border-[#dde1e8] pt-[22px]">
        <Icon w={18} h={6}>
          <circle cx="3" cy="3" r="1.500" />
          <circle cx="9" cy="3" r="1.500" />
          <circle cx="15" cy="3" r="1.500" />
        </Icon>
      </div>
    </div>
  );
}

function StatusBar() {
  return (
    <footer className="flex h-7 shrink-0 items-center border-t border-[#dde1e8] pr-4 pb-px pl-[15px]">
      <Icon w={17} h={16}>
        <circle cx="4.500" cy="4" r="3.500" />
        <circle cx="4.500" cy="4" r="1.500" />
        <path d="M10 1.500h6v4h-2.500v10H11M13.500 1.500v4M2 15.500v-3h9v3zM4 12.500v-3" />
      </Icon>
      <Divider className="ml-[15px] h-[14px]" />
      <div className="ml-auto flex items-center">
        <button type="button" aria-label="护眼模式" className="flex size-6 items-center justify-center rounded-sm bg-[#d9dee5]">
          <Icon w={18} h={18}>
            <path d="M1 11c3.500-7 12.500-7 16 0-3.500 7-12.500 7-16 0zM9 1v2.500M3.500 2.500L5 5M14.500 2.500L13 5" />
            <circle cx="9" cy="11" r="3" />
          </Icon>
        </button>
        <button type="button" aria-label="阅读模式" className="ml-[3px] flex items-center gap-1">
          <Icon>
            <path d="M5.500.500h5v15h-5zM.5 5.500h15v5H.5zM8 5v6" />
          </Icon>
          <Caret />
        </button>
        <Divider className="ml-[15px] h-[14px]" />
        <button type="button" aria-label="普通视图" className="ml-[9px] flex size-6 items-center justify-center rounded-sm bg-[#d9dee5]">
          <Icon>
            <path d="M.5 1.500h15v13H.5zM.5 6h15M.5 10.500h15M5.500 1.500v13M10.500 1.500v13" />
          </Icon>
        </button>
        <button type="button" aria-label="分页预览" className="ml-[6px]">
          <Icon>
            <path d="M1.500.500h13v15h-13zM4 2.500h8v11H4zM8 2.500v11" />
          </Icon>
        </button>
        <button type="button" aria-label="页面布局" className="ml-[10px]">
          <Icon>
            <path d="M.5 1.500h15v13H.5zM5.500 1.500v9M10.500 1.500v9M.5 10.500h10" />
          </Icon>
        </button>
        <Divider className="ml-[14px] h-[14px]" />
        <button type="button" className="ml-[10px] flex items-center gap-[6px]">
          100%
          <Caret />
        </button>
        <button type="button" aria-label="缩小" className="ml-3 h-[2px] w-[10px] bg-[#2b3145]" />
        <input
          type="range"
          aria-label="显示比例"
          defaultValue={46}
          className="mx-3 h-3 w-[150px] appearance-none bg-[linear-gradient(to_right,#3a4156_46%,#b9c0cc_46%)] bg-[length:100%_1px] bg-center bg-no-repeat [&::-webkit-slider-thumb]:size-3 [&::-webkit-slider-thumb]:appearance-none [&::-webkit-slider-thumb]:rounded-full [&::-webkit-slider-thumb]:border [&::-webkit-slider-thumb]:border-[#3a4156] [&::-webkit-slider-thumb]:bg-[#eef2ee]"
        />
        <button type="button" aria-label="放大" className="-ml-3">
          <Icon w={10} h={10}>
            <path d="M5 0v10M0 5h10" strokeWidth="2" />
          </Icon>
        </button>
        <button type="button" aria-label="全屏" className="ml-[13px]">
          <Icon w={14} h={14}>
            <path d="M5 .5H.5V5M9 .5h4.500V5M5 13.500H.5V9M9 13.500h4.500V9M1 1l4 4M13 1L9 5M1 13l4-4M13 13L9 9" />
          </Icon>
        </button>
      </div>
    </footer>
  );
}

/* ---------- desktop overlays ---------- */

function InputMethodBar() {
  return (
    <div className="absolute right-[38px] bottom-[104px] z-20 flex h-[26px] w-[137px] items-center justify-end border border-[#b5cbe6] bg-white text-[#0a6cd6]">
      <svg width="34" height="34" viewBox="0 0 34 34" className="absolute bottom-[-3px] left-[-19px]" aria-hidden="true">
        <rect x="4" y="4" width="26" height="26" rx="3" fill="#f4511e" transform="rotate(-12 17 17)" />
        <path
          d="M27 8.500C18 6 8 9.500 9.500 14c1.500 3.500 15 1.500 15 6 0 4.500-9.500 6-17 3.500"
          fill="none"
          stroke="#fff"
          strokeWidth="3.500"
        />
      </svg>
      <span className="flex w-6 justify-center text-[15px] leading-6 font-bold">中</span>
      <span className="flex w-6 justify-center">
        <Icon w={12} h={12}>
          <circle cx="2.500" cy="3" r="1.800" strokeWidth="1.500" />
          <path d="M8.500 5h3v3l-2 3.500H8.500L9.500 8h-1z" fill="currentColor" stroke="none" />
        </Icon>
      </span>
      <span className="flex w-6 justify-center">
        <Icon w={12} h={16}>
          <rect x="3" y="0" width="6" height="9.500" rx="3" fill="currentColor" stroke="none" />
          <path d="M1 6c0 7 10 7 10 0M6 11v4M3 15h6" strokeWidth="1.600" />
        </Icon>
      </span>
      <span className="flex w-6 justify-center">
        <Icon w={15} h={12}>
          <rect x=".8" y=".8" width="13.400" height="10.400" rx="1" strokeWidth="1.600" />
          <path d="M3 3.700h9M3 6.200h9" strokeDasharray="1.800 1.800" strokeWidth="1.400" />
          <path d="M4 9h7" strokeWidth="1.400" />
        </Icon>
      </span>
      <span className="flex h-full w-6 items-center justify-center bg-linear-to-tr from-[#c9f3fb] via-white to-[#f7e6fb]">
        <svg width="13" height="13" viewBox="0 0 13 13" aria-hidden="true">
          <rect width="6" height="6" rx="1.500" fill="#7a5cf0" />
          <rect x="7.700" y=".7" width="4.600" height="4.600" rx="1.500" fill="none" stroke="#5f66f5" strokeWidth="1.400" />
          <rect y="7" width="6" height="6" rx="1.500" fill="#a45bd0" />
          <rect x="7" y="7" width="6" height="6" rx="1.500" fill="#5b6cf3" />
        </svg>
      </span>
    </div>
  );
}

const LEVELS = [
  "bg-[#2f3342]", "bg-[#2f3342]", "bg-[#2f3342]", "bg-[#2f3342]", "bg-[#2f3342]",
  "bg-[#eda968]", "bg-[#edbd6c]", "bg-[#edcd70]", "bg-[#ecda76]", "bg-[#e6e07c]",
  "bg-[#dce484]", "bg-[#cfe58a]", "bg-[#c2e690]", "bg-[#b4e698]", "bg-[#a6e5a0]",
  "bg-[#99e4a9]", "bg-[#8de2b3]", "bg-[#82e0be]", "bg-[#79ddc8]", "bg-[#72dad1]",
  "bg-[#6cd7da]", "bg-[#66d4e0]", "bg-[#60d0e4]",
];

function LevelMeter() {
  return (
    <div className="absolute right-0 bottom-[201px] z-20 flex h-[59px] w-[10px] flex-col items-center justify-center gap-px rounded-l-sm border border-r-0 border-[#3b404f] bg-[#565c6e]">
      {LEVELS.map((level, i) => (
        <span key={i} className={clsx("h-px w-1", level)} />
      ))}
    </div>
  );
}

function Watermark() {
  return (
    <div className="pointer-events-none absolute right-3 bottom-[6px] z-20 flex items-center opacity-80">
      <svg width="44" height="42" viewBox="0 0 44 42" aria-hidden="true">
        <path d="M43 2C22 0 2 14 2 26c0 7 9 7 12 2-3 1-4-1-3-4C14 15 27 5 43 2z" fill="#3f93d6" />
        <path d="M31 6C20 9 12 19 16 24c4 4 10-1 9-5-4 3-6 1-5-2 2-5 7-9 11-11z" fill="#5aaee6" />
        <path d="M33 10c10 1 12 11 5 18-8 8-20 9-32 12 6-6 22-7 27-16 3-5 2-10 0-14z" fill="#54b66a" />
        <path d="M4 40c6-7 12-9 20-10-6 3-12 7-20 10z" fill="#c7d94a" />
      </svg>
      <div className="w-[104px] whitespace-nowrap">
        <p className="text-[21px] leading-6 font-bold text-[#4a90d4]">极光下载站</p>
        <p className="font-['Liberation_Sans',sans-serif] text-[17px] leading-5 text-[#52ba68]">www.xz7.com</p>
      </div>
    </div>
  );
}

export default function App() {
  return (
    <div className="relative flex min-h-screen flex-col overflow-hidden bg-[#f5f7f9] font-['Noto_Sans','Noto_Sans_CJK_SC',sans-serif] text-xs leading-4 text-[#272d3d]">
      <TitleBar />
      <MenuBar />
      <Ribbon />
      <div className="flex flex-1">
        <main className="flex min-w-0 flex-1 flex-col">
          <FormulaBar />
          <div className="flex flex-1">
            <div className="relative min-w-0 flex-1 overflow-hidden bg-[linear-gradient(#f5f7f9_22px,#cce8cf_22px)]">
              <Grid />
              <SheetObjects />
            </div>
            <VerticalScroll />
          </div>
          <SheetTabs />
        </main>
        <SelectionPane />
        <SideRail />
      </div>
      <StatusBar />
      <InputMethodBar />
      <LevelMeter />
      <Watermark />
    </div>
  );
}
